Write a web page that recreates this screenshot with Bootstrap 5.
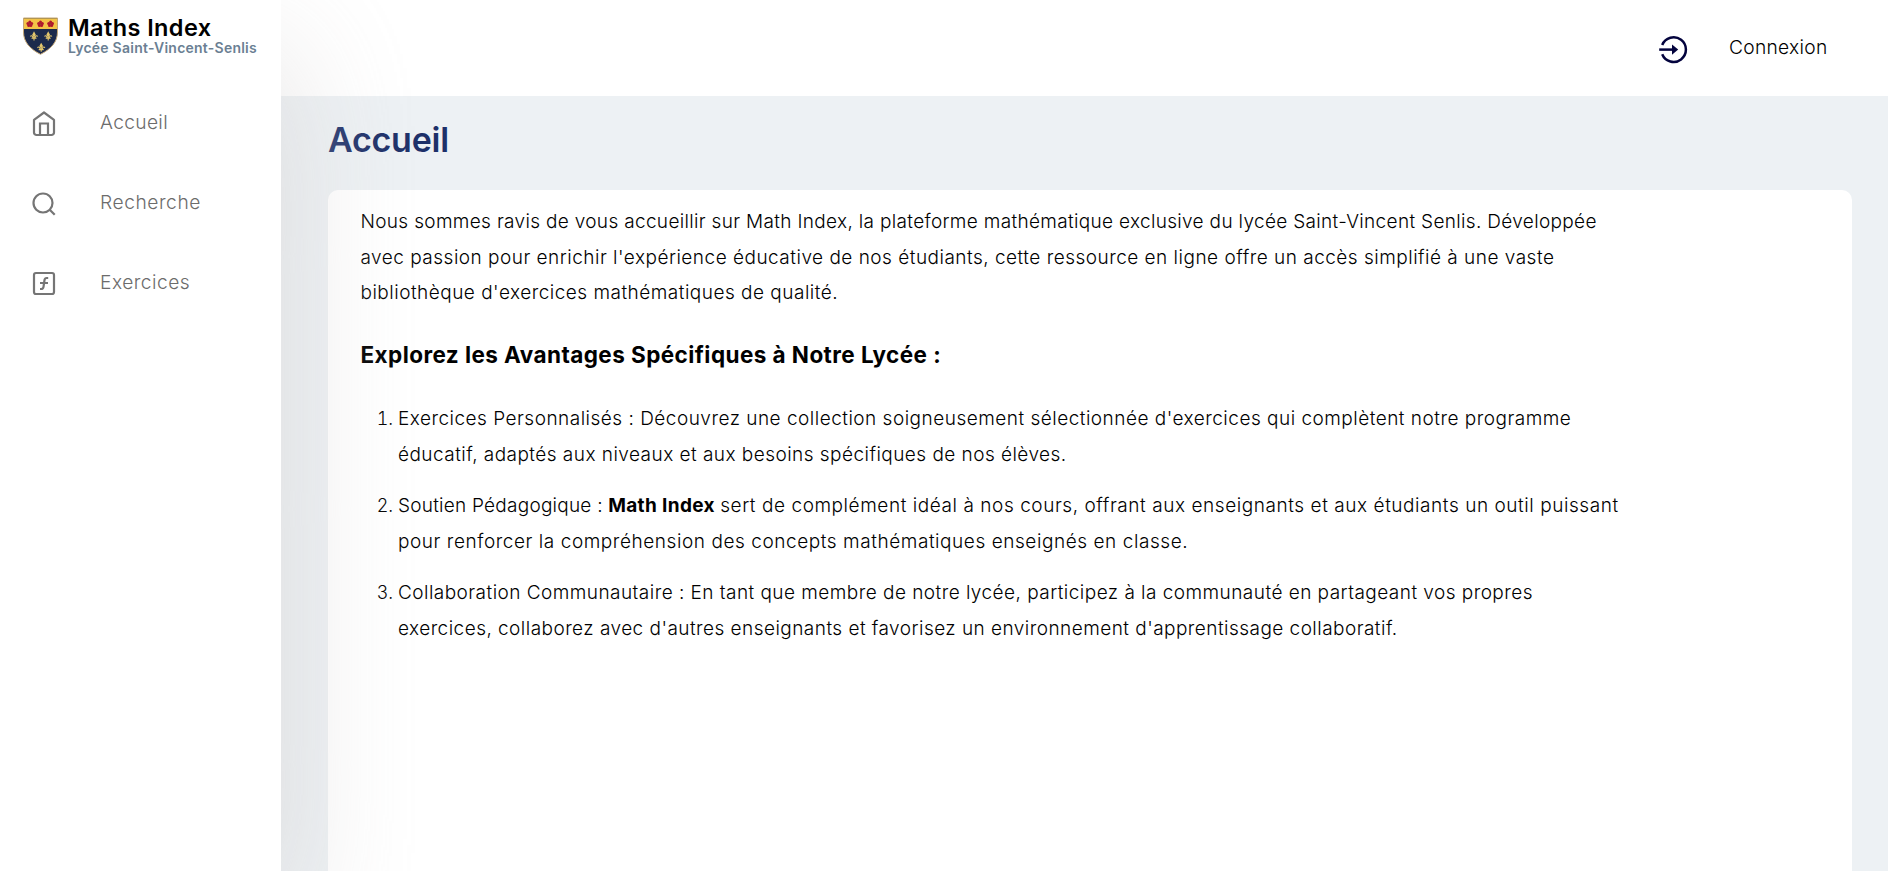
<!DOCTYPE html>
<html lang="fr">
<head>
<meta charset="utf-8">
<meta name="viewport" content="width=device-width, initial-scale=1">
<title>Maths Index - Accueil</title>
<link href="https://cdn.jsdelivr.net/npm/bootstrap@5.3.0/dist/css/bootstrap.min.css" rel="stylesheet">
<style>
body { font-family: Inter, "Liberation Sans", sans-serif; font-weight: 300; color: #000; background: #edf1f4; }
.sidebar { width: 281px; z-index: 2; box-shadow: 4px 54px 130px rgba(212,209,209,.64); }
.brand { padding: 16px 0 0 22px; height: 58px; gap: 9px; }
.brand-title { font-size: 23.5px; font-weight: 600; line-height: 24px; letter-spacing: .4px; }
.brand-sub { font-size: 14px; font-weight: 600; line-height: 16px; letter-spacing: .24px; color: #6b7f93; }
.side-nav { padding-top: 25px; }
.side-nav .nav-link { height: 80px; padding: 0 0 0 29px; gap: 41px; font-size: 19.2px; color: #6c6c6c; }
.side-nav svg { margin-top: 2px; }
.side-nav span { padding-bottom: 2px; }
.topbar { height: 96px; padding-right: 60.5px; gap: 40px; }
.login-link { font-size: 19.2px; letter-spacing: .28px; line-height: 24px; padding-bottom: 2px; }
.page-body { padding: 23px 36px 0 47px; }
.page-title { font-size: 34px; font-weight: 600; line-height: 42px; letter-spacing: -.25px; color: #1d3069; margin: 0 0 29px; }
.panel { border-radius: 10px 10px 0 0; padding: 14px 32px 0 32.5px; }
.panel-text { font-size: 19px; line-height: 35.5px; white-space: nowrap; }
.panel h2 { font-size: 22.5px; font-weight: 700; line-height: 27px; letter-spacing: .43px; margin: 30px 0 33px; }
.panel ol { padding-left: 37.5px; line-height: 36px; }
.panel li { margin-bottom: 15px; }
.panel li::marker { font-size: 18px; }
.panel strong { font-weight: 700; letter-spacing: .36px; }
.ls-20 { letter-spacing: .24px; }
.ls-33 { letter-spacing: .33px; }
.ls-45 { letter-spacing: .46px; }
.ls-49 { letter-spacing: .49px; }
.ls-56 { letter-spacing: .56px; }
</style>
</head>
<body class="overflow-hidden">
<div class="d-flex vh-100">
  <aside class="sidebar bg-white flex-shrink-0 position-relative">
    <div class="brand d-flex">
      <svg width="37" height="40" viewBox="0 0 37 40" class="flex-shrink-0">
        <path d="M1.500 2h34v14c0 10-6.500 17-17 22.300C8 33 1.500 26 1.500 16z" fill="#1c2a4c" stroke="#c4a777" stroke-width="1"/>
        <path d="M2 2.500h33v10.500H2z" fill="#f2c347"/>
        <g fill="#b0182d">
          <g id="rose"><circle cx="7.800" cy="5.900" r="1.500"/><circle cx="5.900" cy="7.500" r="1.500"/><circle cx="9.700" cy="7.500" r="1.500"/><circle cx="6.700" cy="9.500" r="1.500"/><circle cx="8.900" cy="9.500" r="1.500"/><circle cx="7.800" cy="7.900" r=".7" fill="#7b1723"/></g>
          <use href="#rose" x="10.700"/><use href="#rose" x="20.800"/>
        </g>
        <g fill="none" stroke="#e3c66c" stroke-width="1.100">
          <path id="lys" d="M12 16.500v8M12 16.500l-1.200 2.200L12 20.500l1.200-1.800zM8.300 20.500c1.500-1.800 2.700 0 2.700 2.200M15.700 20.500c-1.500-1.800-2.700 0-2.700 2.200M9.500 22.300h5"/>
          <use href="#lys" x="14.200"/><use href="#lys" x="7.200" y="11.300"/>
        </g>
      </svg>
      <div>
        <div class="brand-title">Maths Index</div>
        <div class="brand-sub text-nowrap">Lycée Saint-Vincent-Senlis</div>
      </div>
    </div>
    <nav class="side-nav nav flex-column">
      <a class="nav-link d-flex align-items-center" href="#">
        <svg width="30" height="30" viewBox="0 0 30 30" fill="none" stroke="#757575" stroke-width="2.200" stroke-linejoin="round"><path d="M5 10.800 15 3.500l10 7.300v12.700a2.500 2.500 0 0 1-2.500 2.500h-15A2.500 2.500 0 0 1 5 23.500z"/><path d="M11 26V14.500h8V26" stroke-linejoin="miter"/></svg>
        <span class="ls-33">Accueil</span>
      </a>
      <a class="nav-link d-flex align-items-center" href="#">
        <svg width="30" height="30" viewBox="0 0 30 30" fill="none" stroke="#757575" stroke-width="2.200"><circle cx="14" cy="14" r="9.500"/><path d="m20.700 20.700 5 5"/></svg>
        <span class="ls-56">Recherche</span>
      </a>
      <a class="nav-link d-flex align-items-center" href="#">
        <svg width="30" height="30" viewBox="0 0 30 30" fill="none" stroke="#757575" stroke-width="2.200"><rect x="5" y="4" width="20" height="21" rx="2"/><path d="M19.200 9h-1.500q-1.900 0-2.200 2l-1 6.800q-.3 2.200-2.500 2.200h-1M11 14h8"/></svg>
        <span class="ls-49">Exercices</span>
      </a>
    </nav>
  </aside>
  <div class="flex-grow-1 d-flex flex-column">
    <header class="topbar bg-white d-flex align-items-center justify-content-end flex-shrink-0">
      <svg width="30" height="30" viewBox="0 0 30 30" class="mt-1" fill="none" stroke="#03033d" stroke-width="2.500"><path d="M3.200 10a12.300 12.300 0 1 1 0 9.200"/><path d="M.2 14.600H14"/><path d="m13 9.500 6.200 5.100-6.200 5.100z" fill="#03033d" stroke="none"/></svg>
      <span class="login-link">Connexion</span>
    </header>
    <main class="page-body flex-grow-1 d-flex flex-column">
      <h1 class="page-title">Accueil</h1>
      <section class="panel bg-white flex-grow-1">
        <div class="panel-text">
          <p class="mb-0"><span class="ls-33">Nous sommes ravis de vous accueillir sur Math Index, la plateforme mathématique exclusive du lycée Saint-Vincent Senlis. Développée</span><br>
            <span class="ls-49">avec passion pour enrichir l'expérience éducative de nos étudiants, cette ressource en ligne offre un accès simplifié à une vaste</span><br>
            <span class="ls-49">bibliothèque d'exercices mathématiques de qualité.</span></p>
          <h2>Explorez les Avantages Spécifiques à Notre Lycée :</h2>
          <ol class="mb-0">
            <li><span class="ls-49">Exercices Personnalisés : Découvrez une collection soigneusement sélectionnée d'exercices qui complètent notre programme</span><br><span class="ls-45">éducatif, adaptés aux niveaux et aux besoins spécifiques de nos élèves.</span></li>
            <li><span class="ls-20">Soutien Pédagogique :</span> <strong>Math Index</strong> <span class="ls-56">sert de complément idéal à nos cours, offrant aux enseignants et aux étudiants un outil puissant</span><br><span class="ls-56">pour renforcer la compréhension des concepts mathématiques enseignés en classe.</span></li>
            <li><span class="ls-45">Collaboration Communautaire : En tant que membre de notre lycée, participez à la communauté en partageant vos propres</span><br><span class="ls-45">exercices, collaborez avec d'autres enseignants et favorisez un environnement d'apprentissage collaboratif.</span></li>
          </ol>
        </div>
      </section>
    </main>
  </div>
</div>
<script src="https://cdn.jsdelivr.net/npm/bootstrap@5.3.0/dist/js/bootstrap.bundle.min.js"></script>
</body>
</html>
